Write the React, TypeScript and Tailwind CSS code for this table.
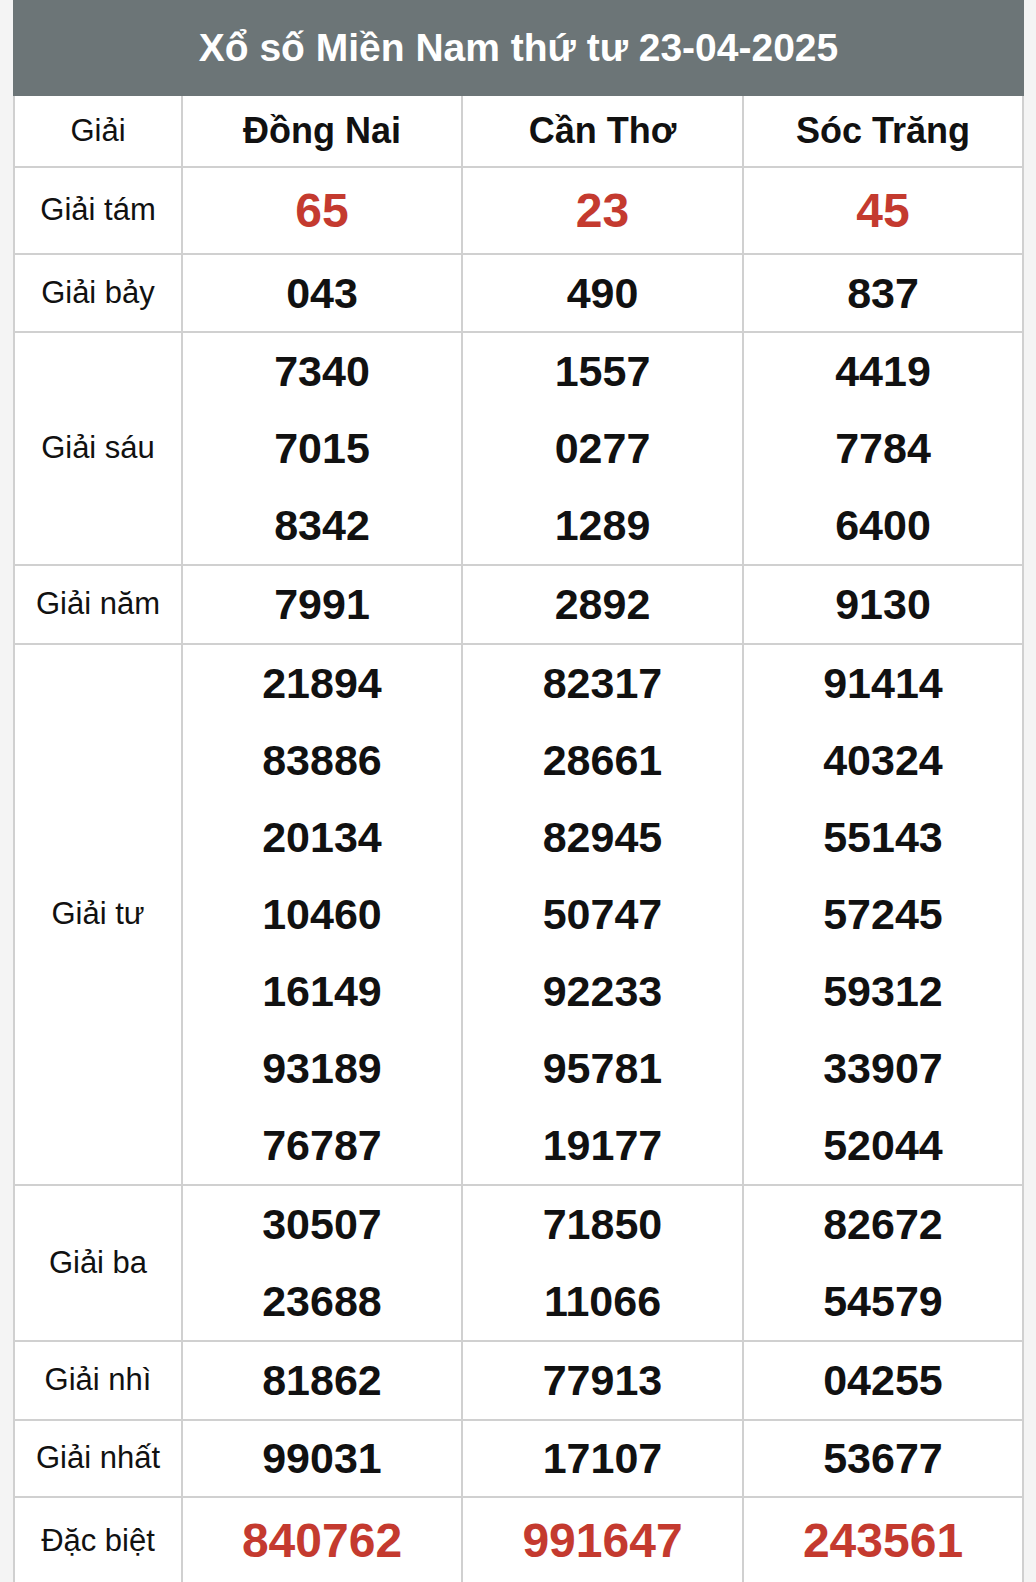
import React from "react";

type Row = {
  label: string;
  h: string;
  red?: boolean;
  cols: string[][];
};

const rows: Row[] = [
  { label: "Giải tám", h: "h-[87px]", red: true, cols: [["65"], ["23"], ["45"]] },
  { label: "Giải bảy", h: "h-[78px]", cols: [["043"], ["490"], ["837"]] },
  {
    label: "Giải sáu",
    h: "h-[233px]",
    cols: [
      ["7340", "7015", "8342"],
      ["1557", "0277", "1289"],
      ["4419", "7784", "6400"],
    ],
  },
  { label: "Giải năm", h: "h-[79px]", cols: [["7991"], ["2892"], ["9130"]] },
  {
    label: "Giải tư",
    h: "h-[541px]",
    cols: [
      ["21894", "83886", "20134", "10460", "16149", "93189", "76787"],
      ["82317", "28661", "82945", "50747", "92233", "95781", "19177"],
      ["91414", "40324", "55143", "57245", "59312", "33907", "52044"],
    ],
  },
  {
    label: "Giải ba",
    h: "h-[156px]",
    cols: [
      ["30507", "23688"],
      ["71850", "11066"],
      ["82672", "54579"],
    ],
  },
  { label: "Giải nhì", h: "h-[79px]", cols: [["81862"], ["77913"], ["04255"]] },
  { label: "Giải nhất", h: "h-[77px]", cols: [["99031"], ["17107"], ["53677"]] },
  { label: "Đặc biệt", h: "h-[88px]", red: true, cols: [["840762"], ["991647"], ["243561"]] },
];

const cell = "border-r-2 border-b-2 border-[#d0d0d0]";

export default function App() {
  return (
    <div
      className="min-h-screen bg-[#f4f4f4] pl-[13px] pr-[12px]"
      style={{ fontFamily: '"Liberation Sans", Arial, sans-serif' }}
    >
      <div className="w-[1011px]">
        <div className="h-[96px] bg-[#6c7577] flex items-center justify-center text-white font-bold text-[39px] pt-px">
          Xổ số Miền Nam thứ tư 23-04-2025
        </div>
        <div className="grid grid-cols-[168px_280px_281px_280px] border-l-2 border-[#d0d0d0] bg-white text-[#111]">
          <div className={`${cell} h-[72px] flex items-center justify-center text-[31px]`}>Giải</div>
          {["Đồng Nai", "Cần Thơ", "Sóc Trăng"].map((p) => (
            <div key={p} className={`${cell} h-[72px] flex items-center justify-center text-[36px] font-bold`}>
              {p}
            </div>
          ))}
          {rows.map((r) => (
            <React.Fragment key={r.label}>
              <div className={`${cell} ${r.h} flex items-center justify-center text-[31px]`}>{r.label}</div>
              {r.cols.map((vals, i) => (
                <div key={i} className={`${cell} ${r.h} flex flex-col`}>
                  {vals.map((v, j) => (
                    <div
                      key={j}
                      className={
                        r.red
                          ? "flex-1 flex items-center justify-center font-bold text-[48px] text-[#c43a2f]"
                          : "flex-1 flex items-center justify-center font-bold text-[43px]"
                      }
                    >
                      {v}
                    </div>
                  ))}
                </div>
              ))}
            </React.Fragment>
          ))}
        </div>
      </div>
    </div>
  );
}
